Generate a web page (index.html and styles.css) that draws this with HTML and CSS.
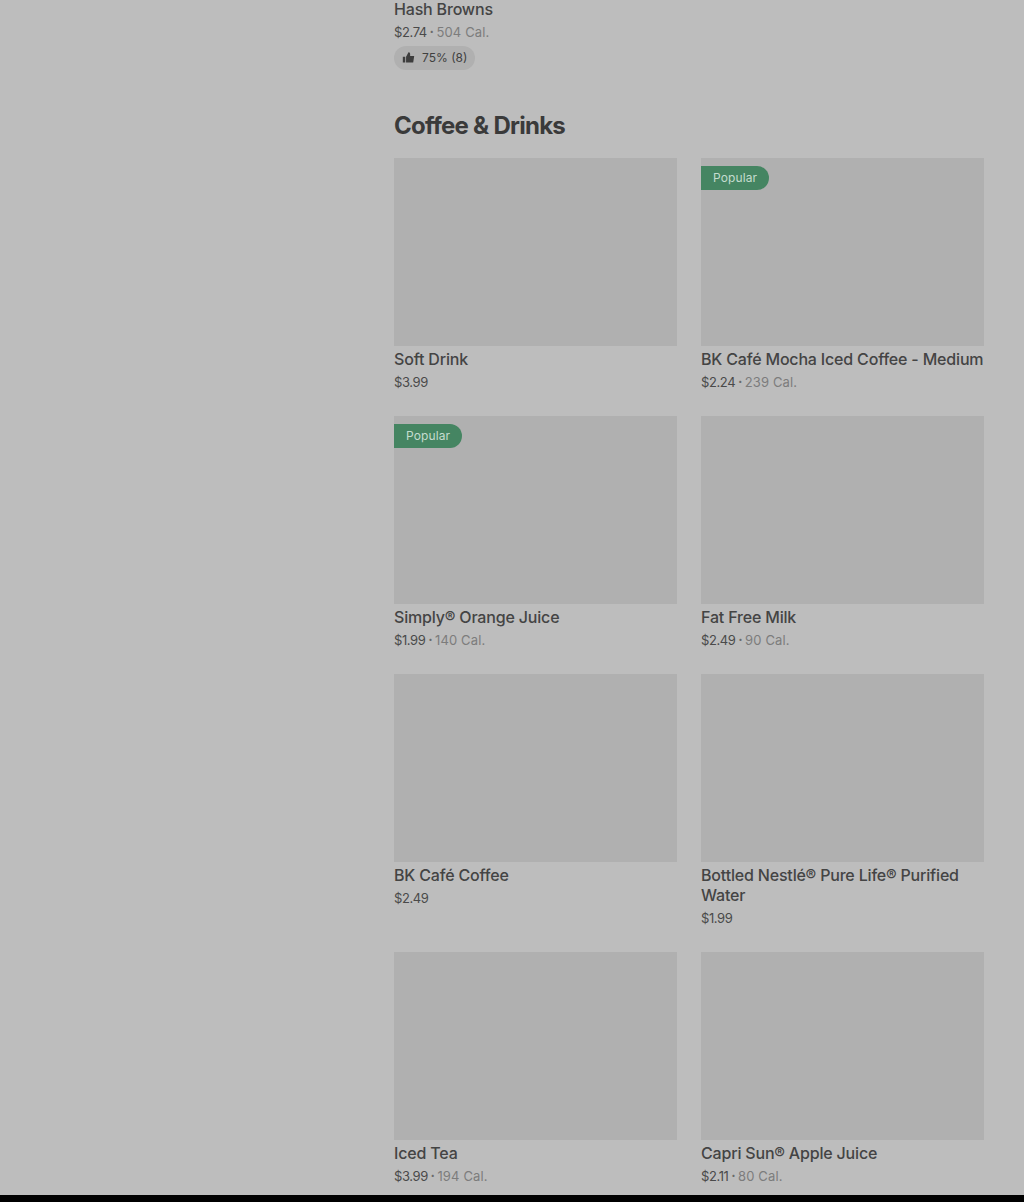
FILE: index.html
```html
<!DOCTYPE html>
<html lang="en">
<head>
<meta charset="utf-8">
<title>Menu</title>
<link rel="stylesheet" href="styles.css">
</head>
<body>
<div class="page">
  <main class="menu">
    <div class="prev-item">
      <div class="name">Hash Browns</div>
      <div class="meta"><span class="price">$2.74</span><span class="dot">•</span><span class="cal">504 Cal.</span></div>
      <div class="rating">
        <svg class="thumb" viewBox="0 0 16 16" aria-hidden="true"><path d="M1 7h3v7H1zM5 7l3-5.5c1.2 0 2 .8 2 2V6h5l-1.2 8H5z"/></svg>
        <span>75% (8)</span>
      </div>
    </div>
    <h2 class="section-title">Coffee &amp; Drinks</h2>
    <div class="grid">
      <article class="card"><div class="photo"></div><div class="name">Soft Drink</div><div class="meta"><span class="price">$3.99</span></div></article>
      <article class="card"><div class="photo"><span class="badge">Popular</span></div><div class="name">BK Café Mocha Iced Coffee - Medium</div><div class="meta"><span class="price">$2.24</span><span class="dot">•</span><span class="cal">239 Cal.</span></div></article>
      <article class="card"><div class="photo"><span class="badge">Popular</span></div><div class="name">Simply® Orange Juice</div><div class="meta"><span class="price">$1.99</span><span class="dot">•</span><span class="cal">140 Cal.</span></div></article>
      <article class="card"><div class="photo"></div><div class="name">Fat Free Milk</div><div class="meta"><span class="price">$2.49</span><span class="dot">•</span><span class="cal">90 Cal.</span></div></article>
      <article class="card"><div class="photo"></div><div class="name">BK Café Coffee</div><div class="meta"><span class="price">$2.49</span></div></article>
      <article class="card"><div class="photo"></div><div class="name">Bottled Nestlé® Pure Life® Purified Water</div><div class="meta"><span class="price">$1.99</span></div></article>
      <article class="card"><div class="photo"></div><div class="name">Iced Tea</div><div class="meta"><span class="price">$3.99</span><span class="dot">•</span><span class="cal">194 Cal.</span></div></article>
      <article class="card"><div class="photo"></div><div class="name">Capri Sun® Apple Juice</div><div class="meta"><span class="price">$2.11</span><span class="dot">•</span><span class="cal">80 Cal.</span></div></article>
    </div>
  </main>
  <div class="footer-bar"></div>
</div>
</body>
</html>
```
FILE: styles.css
```css
* { box-sizing: border-box; }
html, body { margin: 0; padding: 0; }
body { background: #bdbdbd; font-family: Inter, "Noto Sans", "Liberation Sans", sans-serif; color: #3d3d3d; }
.page { height: 1202px; overflow: hidden; display: flex; flex-direction: column; }
.menu { flex: 1; min-height: 0; margin: -1px 40px 0 394px; }
.name { font-size: 16px; line-height: 20px; font-weight: 500; color: #444; letter-spacing: -0.18px; }
.meta { margin-top: 3px; display: flex; align-items: center; font-size: 13px; line-height: 20px; letter-spacing: -0.4px; }
.price { color: #4a4a4a; }
.dot { font-size: 7px; margin: 0 3px; color: #6a6a6a; }
.cal { color: #7c7c7c; letter-spacing: 0.15px; }
.rating { margin-top: 4px; width: 81px; height: 24px; border-radius: 12px; background: #b0b0b0; display: flex; align-items: center; gap: 7px; padding: 0 0 2px 8px; font-size: 12px; color: #404040; }
.thumb { width: 13px; height: 13px; fill: #3d3d3d; flex: none; }
.section-title { margin: 41px 0 17px; font-size: 24px; line-height: 30px; font-weight: 700; letter-spacing: -0.75px; color: #3a3a3a; }
.grid { display: grid; grid-template-columns: 283px 283px; column-gap: 24px; row-gap: 24px; }
.photo { position: relative; height: 188px; margin-bottom: 3px; background: #b0b0b0; }
.badge { position: absolute; top: 8px; left: 0; height: 24px; padding: 0 12px; border-radius: 0 12px 12px 0; background: #458562; color: #c4dccf; font-size: 12px; line-height: 24px; letter-spacing: 0.1px; }
.footer-bar { flex: none; height: 7px; background: #000; }
```
